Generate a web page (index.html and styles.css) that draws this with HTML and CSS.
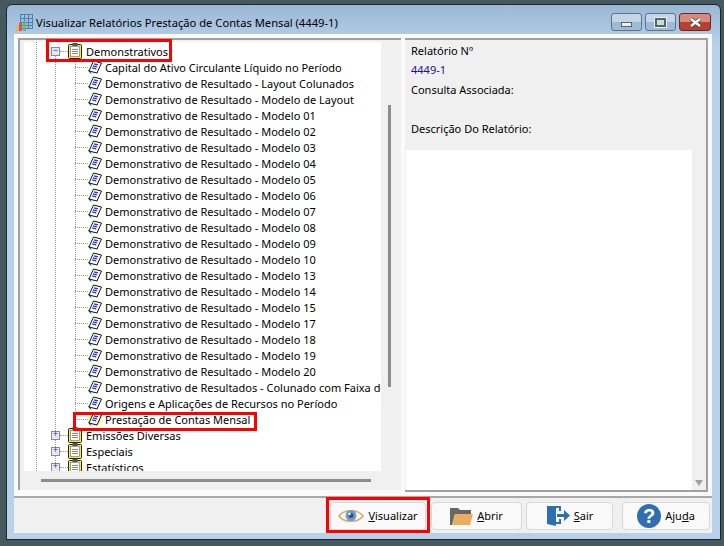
FILE: index.html
```html
<!DOCTYPE html>
<html lang="en">

<head>
    <meta charset="UTF-8">
    <title>Visualizar Relatórios Prestação de Contas Mensal (4449-1)</title>
    <link rel="stylesheet" href="styles.css">
</head>

<body>
    <svg class="defs" width="0" height="0">
        <symbol id="clip" viewBox="0 0 14 16">
            <rect x="0.5" y="1.5" width="13" height="14" rx="1" fill="#f8f020" stroke="#222"/>
            <rect x="2.500" y="3.500" width="9" height="10" fill="#f6f6f6" stroke="#8a8a8a" stroke-width="0.8"/>
            <rect x="4.500" y="0" width="5" height="3" fill="#555"/>
            <path d="M4 6.500h6M4 8.500h6M4 10.500h6" stroke="#8a8a8a"/>
        </symbol>
        <symbol id="leaf" viewBox="0 0 14 14">
            <path d="M5.500 1l8 2-4.500 10-8-2z" fill="#fff" stroke="#111"/>
            <path d="M6 3.800l4 1M5 5.800l4 1M4.200 7.800l4 1" stroke="#1533e0" stroke-width="1.300"/>
            <path d="M0.500 10.500l2.500 3" stroke="#111"/>
        </symbol>
    </svg>

    <div class="window">
        <div class="titlebar">
            <svg class="app-icon" width="17" height="18" viewBox="0 0 17 18">
                <rect x="4.500" y="0.500" width="12" height="14" fill="#9dbfe0" stroke="#4f7fb0"/>
                <path d="M4.500 4.500h12M4.500 8.500h12M4.500 11.500h12M8.500 0.500v14M12.500 0.500v14" stroke="#4f7fb0"/>
                <rect x="0" y="12" width="3" height="5" fill="#eab06a"/>
                <rect x="3" y="9" width="3" height="8" fill="#d9534f"/>
                <rect x="7" y="7" width="3" height="10" fill="#62b87a"/>
            </svg>
            <span class="title">Visualizar Relatórios Prestação de Contas Mensal (4449-1)</span>
            <div class="win-buttons">
                <div class="win-btn"><span class="glyph-min"></span></div>
                <div class="win-btn"><span class="glyph-max"></span></div>
                <div class="win-btn close">
                    <svg width="15" height="11" viewBox="0 0 15 11"><path d="M3 2l9 7M12 2l-9 7" stroke="#444" stroke-width="4"/><path d="M3 2l9 7M12 2l-9 7" stroke="#fff" stroke-width="2.400"/></svg>
                </div>
            </div>
        </div>

        <div class="client">
            <div class="panels">
                <div class="tree-panel">
                    <div class="tree-main">
                        <div class="tree" id="tree"></div>
                        <div class="vscroll"><div class="vthumb"></div></div>
                    </div>
                    <div class="hscroll"><div class="hthumb"></div></div>
                </div>
                <div class="info-panel">
                    <div class="info">
                        <p>Relatório Nº</p>
                        <p class="number">4449-1</p>
                        <p>Consulta Associada:</p>
                        <p class="blank"></p>
                        <p>Descrição Do Relatório:</p>
                    </div>
                    <div class="memo-wrap">
                        <div class="memo"></div>
                        <div class="memo-scroll"><span class="arrow"></span></div>
                    </div>
                </div>
            </div>

            <div class="footer">
                <button class="btn btn-view">
                    <svg width="26" height="16" viewBox="0 0 26 16">
                        <path d="M1 8C6 1 20 1 25 8C20 15 6 15 1 8z" fill="#fff" stroke="#e4a65c" stroke-width="1.600"/>
                        <circle cx="13" cy="7.500" r="5.500" fill="#6c9bcf"/>
                        <circle cx="13" cy="7.500" r="2.500" fill="#2f4f78"/>
                        <circle cx="11.500" cy="6" r="1.200" fill="#fff"/>
                    </svg>
                    <span><u>V</u>isualizar</span>
                </button>
                <button class="btn btn-open">
                    <svg width="23" height="20" viewBox="0 0 23 20">
                        <path d="M0 19V2h8l2 2h11v4H5L2 19z" fill="#666"/>
                        <path d="M2 19L5 8h18l-3 11z" fill="#e9ad62"/>
                    </svg>
                    <span><u>A</u>brir</span>
                </button>
                <button class="btn btn-exit">
                    <svg width="24" height="24" viewBox="0 0 24 24">
                        <path d="M1 2h9v20l-9-2z" fill="#2f6fb0"/>
                        <path d="M10 2h5v5h-2V4h-3zM13 15h2v5h-5v-2h3z" fill="#2f6fb0"/>
                        <path d="M11 10h7V6l6 5.500-6 5.500v-4h-7z" fill="#2f6fb0"/>
                    </svg>
                    <span><u>S</u>air</span>
                </button>
                <button class="btn btn-help">
                    <svg width="24" height="24" viewBox="0 0 24 24">
                        <circle cx="12" cy="12" r="12" fill="#2f6fb0"/>
                        <text x="12" y="19" text-anchor="middle" class="qmark">?</text>
                    </svg>
                    <span>Aj<span>u</span><u>d</u>a</span>
                </button>
            </div>
        </div>

        <div class="mark mark-group"></div>
        <div class="mark mark-item"></div>
        <div class="mark mark-button"></div>
    </div>

    <script>
        var leaves = [
            'Capital do Ativo Circulante Líquido no Período',
            'Demonstrativo de Resultado - Layout Colunados',
            'Demonstrativo de Resultado - Modelo de Layout',
            'Demonstrativo de Resultado - Modelo 01',
            'Demonstrativo de Resultado - Modelo 02',
            'Demonstrativo de Resultado - Modelo 03',
            'Demonstrativo de Resultado - Modelo 04',
            'Demonstrativo de Resultado - Modelo 05',
            'Demonstrativo de Resultado - Modelo 06',
            'Demonstrativo de Resultado - Modelo 07',
            'Demonstrativo de Resultado - Modelo 08',
            'Demonstrativo de Resultado - Modelo 09',
            'Demonstrativo de Resultado - Modelo 10',
            'Demonstrativo de Resultado - Modelo 13',
            'Demonstrativo de Resultado - Modelo 14',
            'Demonstrativo de Resultado - Modelo 15',
            'Demonstrativo de Resultado - Modelo 17',
            'Demonstrativo de Resultado - Modelo 18',
            'Demonstrativo de Resultado - Modelo 19',
            'Demonstrativo de Resultado - Modelo 20',
            'Demonstrativo de Resultados - Colunado com Faixa de Valores',
            'Origens e Aplicações de Recursos no Período',
            'Prestação de Contas Mensal'
        ];

        function folder(name, open) {
            return '<div class="row folder"><span class="toggle">' + (open ? '−' : '+') + '</span><span class="stub"></span>' +
                '<svg class="clip" width="14" height="16"><use href="#clip"/></svg><span>' + name + '</span></div>';
        }

        function leaf(name, active) {
            return '<div class="row item' + (active ? ' active' : '') + '"><span class="stub"></span>' +
                '<svg class="doc" width="14" height="14"><use href="#leaf"/></svg><span>' + name + '</span></div>';
        }

        var html = folder('Demonstrativos', true);
        leaves.forEach(function (name, i) {
            html += leaf(name, i === leaves.length - 1);
        });
        html += folder('Emissões Diversas') + folder('Especiais') + folder('Estatísticos');
        document.getElementById('tree').innerHTML = html;
    </script>
</body>

</html>
```

FILE: styles.css
```css
* {
    box-sizing: border-box;
    margin: 0;
    padding: 0;
}

body {
    width: 724px;
    height: 546px;
    overflow: hidden;
    background-color: #45595f;
    font-family: "Noto Sans", sans-serif;
    font-size: 11px;
    color: #000;
}

.defs {
    display: block;
    height: 0;
}

.window {
    position: relative;
    width: 715px;
    height: 536px;
    margin: 4px 0 0 6px;
    display: flex;
    flex-direction: column;
    padding: 0 8px 6px 7px;
    background: linear-gradient(#9ab7d4, #b7d1ea 40px);
    border: 1px solid #1c2a30;
    border-radius: 6px 6px 0 0;
}

.titlebar {
    height: 29px;
    display: flex;
    align-items: center;
    flex-shrink: 0;
}

.app-icon {
    margin: 7px 3px 0 2px;
}

.title {
    font-size: 11.200px;
    flex: 1;
    margin-top: 6px;
}

.win-buttons {
    display: flex;
    gap: 3px;
    margin-right: 1px;
    align-self: flex-start;
    padding-top: 8px;
}

.win-btn {
    width: 31px;
    height: 18px;
    border: 1px solid #5f7488;
    border-radius: 3px;
    background: linear-gradient(#c3d6e8 50%, #9fbad4 50%);
    display: flex;
    align-items: center;
    justify-content: center;
}

.win-btn.close {
    width: 32px;
    border-color: #6b2a2a;
    background: linear-gradient(#d98a7c 50%, #b8402f 50%);
}

.glyph-min {
    width: 11px;
    height: 5px;
    margin-top: 5px;
    background-color: #eee;
    border: 1px solid #566;
}

.glyph-max {
    width: 11px;
    height: 9px;
    border: 2px solid #566;
    outline: 1px solid #e8eef4;
    background-color: #cdd;
}

.client {
    flex: 1;
    display: flex;
    flex-direction: column;
    background-color: #f0f0f0;
    min-height: 0;
}

.panels {
    height: 464px;
    padding: 4px 3px 4px 4px;
    background-color: #fafafa;
    border-bottom: 2px solid #a8a8a8;
    display: flex;
}

.tree-panel {
    width: 383px;
    margin-bottom: 2px;
    display: flex;
    flex-direction: column;
    background-color: #f0f0f0;
    border: solid #a0a0a0;
    border-width: 2px 0 0 2px;
    padding: 2px 0 0 4px;
}

.tree-main {
    height: 429px;
    display: flex;
}

.tree {
    width: 357px;
    overflow: hidden;
    padding-top: 1px;
    background-color: #fff;
    background-image:
        repeating-linear-gradient(#999 0 1px, transparent 1px 2px),
        repeating-linear-gradient(#999 0 1px, transparent 1px 2px),
        repeating-linear-gradient(#999 0 1px, transparent 1px 2px);
    background-size: 1px 100%, 1px 100%, 1px 361px;
    background-position: 12px 0, 31px 10px, 51px 18px;
    background-repeat: no-repeat;
}

.row {
    height: 16px;
    display: flex;
    align-items: center;
    white-space: nowrap;
    font-size: 11px;
}

.folder {
    padding-left: 27px;
}

.toggle {
    width: 9px;
    height: 9px;
    border: 1px solid #8a8a8a;
    background-color: #e8e8f0;
    color: #23408f;
    font-size: 9px;
    line-height: 7px;
    text-align: center;
    flex-shrink: 0;
    font-family: "Liberation Mono", monospace;
}

.stub {
    border-top: 1px dotted #999;
    width: 8px;
    flex-shrink: 0;
}

.clip {
    margin-right: 4px;
    flex-shrink: 0;
}

.item {
    padding-left: 51px;
}

.item .stub {
    width: 13px;
}

.doc {
    margin-right: 3px;
    flex-shrink: 0;
}

.active .doc {
    background: radial-gradient(#fff200 45%, transparent 75%);
}

.vscroll {
    width: 20px;
    background-color: #f0f0f0;
    padding-left: 7px;
    padding-top: 63px;
}

.vthumb {
    width: 3px;
    height: 282px;
    background-color: #8c8c8c;
}

.hscroll {
    height: 19px;
    padding: 8px 0 0 17px;
}

.hthumb {
    width: 330px;
    height: 3px;
    background-color: #8c8c8c;
}

.info-panel {
    width: 303px;
    margin-left: 4px;
    display: flex;
    flex-direction: column;
    background-color: #f0f0f0;
    border: solid #a0a0a0;
    border-width: 2px 2px 2px 0;
}

.info {
    height: 110px;
    padding: 1px 0 0 6px;
    font-size: 11px;
}

.info p {
    height: 19.400px;
    line-height: 19px;
}

.info .number {
    color: #24128c;
}

.memo-wrap {
    flex: 1;
    display: flex;
    padding-left: 1px;
}

.memo {
    width: 286px;
    background-color: #fff;
}

.memo-scroll {
    flex: 1;
    position: relative;
}

.arrow {
    position: absolute;
    bottom: 4px;
    left: 3px;
    border-style: solid;
    border-width: 6px 4px 0;
    border-color: #a0a0a0 transparent transparent;
}

.footer {
    flex: 1;
    display: flex;
    align-items: center;
    padding-left: 316px;
}

.btn {
    height: 28px;
    display: flex;
    align-items: center;
    justify-content: center;
    gap: 4px;
    background-color: #f9f9f9;
    border: 1px solid #d8d8d8;
    border-radius: 4px;
    font-family: "Noto Sans", sans-serif;
    font-size: 11px;
    color: #000;
}

.btn-view {
    width: 96px;
}

.btn-open {
    width: 91px;
    margin-left: 5px;
}

.btn-exit {
    width: 87px;
    margin-left: 4px;
}

.btn-help {
    width: 88px;
    margin-left: 9px;
}

.qmark {
    fill: #fff;
    font-family: "Liberation Sans", sans-serif;
    font-weight: bold;
    font-size: 20px;
}

.mark {
    position: absolute;
    border: 3px solid #f00;
}

.mark-group {
    left: 39px;
    top: 34px;
    width: 126px;
    height: 23px;
}

.mark-item {
    left: 66px;
    top: 407px;
    width: 184px;
    height: 19px;
}

.mark-button {
    left: 319px;
    top: 492px;
    width: 104px;
    height: 36px;
}
```
